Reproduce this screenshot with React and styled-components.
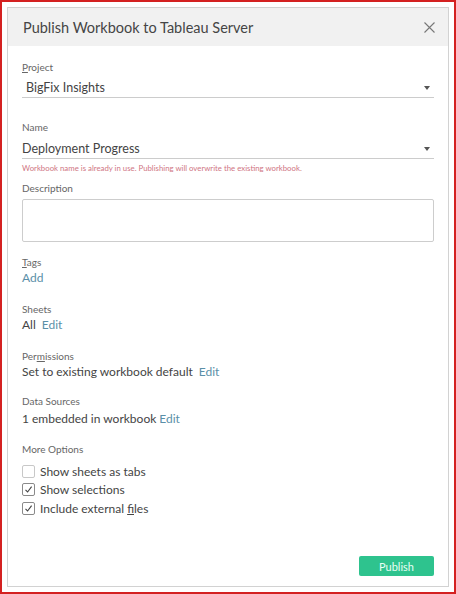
import styled, { createGlobalStyle } from 'styled-components';

const GlobalStyle = createGlobalStyle`
  html, body {
    margin: 0;
    padding: 0;
    background: #ffffff;
  }
  body {
    font-family: Lato, "Noto Sans", sans-serif;
    color: #444444;
  }
`;

const Frame = styled.div`
  box-sizing: border-box;
  width: 456px;
  height: 594px;
  border: 2px solid #d42121;
  padding: 5px;
  background: #ffffff;
`;

const Dialog = styled.div`
  box-sizing: border-box;
  height: 100%;
  border: 1px solid #d2d2d2;
  display: flex;
  flex-direction: column;
`;

const Header = styled.div`
  height: 38px;
  background: #f1f1f1;
  display: flex;
  align-items: center;
  justify-content: space-between;
  padding: 0 12px 0 15px;
`;

const Title = styled.h1`
  margin: 0;
  font-size: 14.5px;
  font-weight: 400;
  color: #454545;
`;

const CloseButton = styled.button`
  border: 0;
  background: none;
  padding: 0;
  width: 14px;
  height: 14px;
  display: flex;
  align-items: center;
  justify-content: center;
  cursor: pointer;
`;

const Body = styled.div`
  flex: 1;
  display: flex;
  flex-direction: column;
  padding: 14px 14px 10px 14px;
`;

const Label = styled.div`
  font-size: 10px;
  line-height: 14px;
  color: #666666;

  u {
    text-decoration: underline;
    text-underline-offset: 1px;
  }
`;

const Select = styled.div`
  box-sizing: border-box;
  display: flex;
  align-items: center;
  justify-content: space-between;
  height: 24px;
  margin-top: ${(p) => p.$offset || 0}px;
  border-bottom: 1px solid #cccccc;
  font-size: 12.5px;
  color: #444444;
  padding: 4px 4px 0 ${(p) => p.$indent || 0}px;
`;

const Caret = styled.span`
  width: 0;
  height: 0;
  border-left: 3px solid transparent;
  border-right: 3px solid transparent;
  border-top: 4px solid #555555;
`;

const ErrorText = styled.div`
  margin-top: 3px;
  font-size: 7.8px;
  line-height: 12px;
  color: #cf7583;
`;

const Field = styled.div`
  margin-top: ${(p) => p.$top}px;
`;

const TextArea = styled.textarea`
  display: block;
  box-sizing: border-box;
  width: 100%;
  height: 43px;
  margin-top: 4px;
  border: 1px solid #cdcdcd;
  border-radius: 2px;
  resize: none;
  font-family: inherit;
  font-size: 12px;
  outline: none;
`;

const Value = styled.div`
  font-size: 12px;
  line-height: 16px;
  margin-top: ${(p) => p.$offset || 1}px;
  color: #444444;
`;

const Link = styled.a`
  color: #5a8fa8;
  text-decoration: none;
  margin-left: ${(p) => p.$space || 0}px;
  cursor: pointer;
`;

const CheckList = styled.div`
  display: flex;
  flex-direction: column;
  margin-top: 6px;
`;

const CheckRow = styled.label`
  display: flex;
  align-items: center;
  gap: 5px;
  height: 18.5px;
  font-size: 12px;
  color: #444444;

  u {
    text-decoration: underline;
  }
`;

const Box = styled.span`
  box-sizing: border-box;
  width: 13px;
  height: 13px;
  border: 1px solid ${(p) => (p.$checked ? '#8a8a8a' : '#c8c8c8')};
  border-radius: 2px;
  display: flex;
  align-items: center;
  justify-content: center;
`;

const Footer = styled.div`
  margin-top: auto;
  display: flex;
  justify-content: flex-end;
`;

const PublishButton = styled.button`
  width: 75px;
  height: 20px;
  border: 0;
  border-radius: 2px;
  background: #2ec38e;
  color: #e8fff5;
  font-family: inherit;
  font-size: 11px;
  cursor: pointer;
`;

function Check({ checked, children }) {
  return (
    <CheckRow>
      <Box $checked={checked}>
        {checked && (
          <svg width="9" height="9" viewBox="0 0 9 9">
            <path d="M1.5 4.8 L3.6 7 L7.6 1.6" fill="none" stroke="#444" strokeWidth="1.1" />
          </svg>
        )}
      </Box>
      {children}
    </CheckRow>
  );
}

export default function App() {
  return (
    <>
      <GlobalStyle />
      <Frame>
        <Dialog>
          <Header>
            <Title>Publish Workbook to Tableau Server</Title>
            <CloseButton aria-label="Close">
              <svg width="11" height="11" viewBox="0 0 11 11">
                <path d="M0.5 0.5 L10.5 10.5 M10.5 0.5 L0.5 10.5" stroke="#777" strokeWidth="1.1" />
              </svg>
            </CloseButton>
          </Header>
          <Body>
            <Label>
              <u>P</u>roject
            </Label>
            <Select $indent={4}>
              BigFix Insights
              <Caret />
            </Select>

            <Field $top={22}>
              <Label>Name</Label>
              <Select $offset={1}>
                Deployment Progress
                <Caret />
              </Select>
              <ErrorText>Workbook name is already in use. Publishing will overwrite the existing workbook.</ErrorText>
            </Field>

            <Field $top={7}>
              <Label>Description</Label>
              <TextArea />
            </Field>

            <Field $top={13}>
              <Label>
                <u>T</u>ags
              </Label>
              <Value>
                <Link>Add</Link>
              </Value>
            </Field>

            <Field $top={16}>
              <Label>Sheets</Label>
              <Value>
                All<Link $space={6}>Edit</Link>
              </Value>
            </Field>

            <Field $top={16}>
              <Label>
                Per<u>m</u>issions
              </Label>
              <Value>
                Set to existing workbook default<Link $space={6}>Edit</Link>
              </Value>
            </Field>

            <Field $top={14}>
              <Label>Data Sources</Label>
              <Value $offset={3}>
                1 embedded in workbook<Link $space={3}>Edit</Link>
              </Value>
            </Field>

            <Field $top={15}>
              <Label>More Options</Label>
              <CheckList>
                <Check>Show sheets as tabs</Check>
                <Check checked>Show selections</Check>
                <Check checked>
                  <span>
                    Include external <u>f</u>iles
                  </span>
                </Check>
              </CheckList>
            </Field>

            <Footer>
              <PublishButton>Publish</PublishButton>
            </Footer>
          </Body>
        </Dialog>
      </Frame>
    </>
  );
}
